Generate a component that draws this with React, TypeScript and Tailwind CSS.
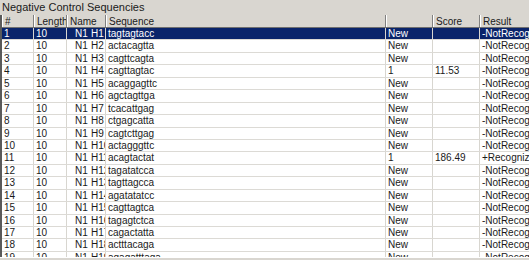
// React Imports
import { FC } from "react";

/**
 * One record of the negative control list.
 */
interface SequenceRow {
  id: number;
  sequence: string;
  status: string;
  score: string;
  result: string;
}

const sequences = [
  "tagtagtacc",
  "actacagtta",
  "cagttcagta",
  "cagttagtac",
  "acaggagttc",
  "agctagttga",
  "tcacattgag",
  "ctgagcatta",
  "cagtcttgag",
  "actagggttc",
  "acagtactat",
  "tagatatcca",
  "tagttagcca",
  "agatatatcc",
  "cagttagtca",
  "tagagtctca",
  "cagactatta",
  "actttacaga",
  "agagatttaga",
];

const rows: SequenceRow[] = sequences.map((sequence, i) => {
  const id = i + 1;
  if (id === 4) {
    return { id, sequence, status: "1", score: "11.53", result: "-NotRecognized" };
  }
  if (id === 11) {
    return { id, sequence, status: "1", score: "186.49", result: "+Recognized" };
  }
  return { id, sequence, status: "New", score: "", result: "-NotRecognized" };
});

const headCell =
  "h-full shrink-0 overflow-hidden whitespace-pre border-r border-r-[#808080] border-l border-l-white pl-[2px] leading-[13px]";
const bodyCell =
  "h-full shrink-0 overflow-hidden whitespace-pre border-r border-r-[#d8d6d0] pl-[2px] leading-[12px]";

/**
 * Column header strip of the list view.
 */
const Header: FC = () => (
  <div className="flex h-[13px] shrink-0 border-b border-b-[#6f6f6f] bg-[#d9d6d0] text-[10px] text-[#1a1a1a]">
    <div className={`${headCell} w-[32px]`}>#</div>
    <div className={`${headCell} w-[33px]`}>Length</div>
    <div className={`${headCell} w-[39px]`}>Name</div>
    <div className={`${headCell} w-[280px]`}>Sequence</div>
    <div className={`${headCell} w-[47px]`}></div>
    <div className={`${headCell} w-[47px]`}>Score</div>
    <div className={`${headCell} w-[80px]`}>Result</div>
  </div>
);

/**
 * A single list view row.
 */
const Row: FC<{ row: SequenceRow; selected: boolean }> = ({ row, selected }) => (
  <div
    className={`flex h-[12.45px] shrink-0 border-b border-b-[#dcdad5] text-[10px] ${
      selected ? "bg-[#0a246a] text-white" : "bg-white text-[#1a1a1a]"
    }`}
  >
    <div className={`${bodyCell} w-[32px]`}>{row.id}</div>
    <div className={`${bodyCell} w-[33px]`}>10</div>
    <div className={`${bodyCell} flex w-[39px] pl-[8px]`}>
      <span className="w-[16px] shrink-0">N1</span>
      <span className="shrink-0">H{row.id}</span>
    </div>
    <div className={`${bodyCell} w-[280px]`}>{row.sequence}</div>
    <div className={`${bodyCell} w-[47px]`}>{row.status}</div>
    <div className={`${bodyCell} w-[47px]`}>{row.score}</div>
    <div className={`${bodyCell} w-[80px]`}>{row.result}</div>
  </div>
);

export default function App() {
  return (
    <div className="h-[260px] w-[529px] overflow-hidden bg-[#d9d6d0] font-['Liberation_Sans',Arial,sans-serif]">
      {/* Title */}
      <div className="h-[15px] pl-[2px] pt-[1px] text-[11px] leading-[13px] text-[#1a1a1a]">
        Negative Control Sequencies
      </div>

      {/* List */}
      <div className="flex h-[242px] flex-col overflow-hidden border-l-2 border-l-[#5a5a5a]">
        <Header />
        {rows.map((row) => (
          <Row key={row.id} row={row} selected={row.id === 1} />
        ))}
      </div>

      {/* Scrollbar edge */}
      <div className="h-[3px] border-t border-t-white bg-[#d9d6d0]" />
    </div>
  );
}
